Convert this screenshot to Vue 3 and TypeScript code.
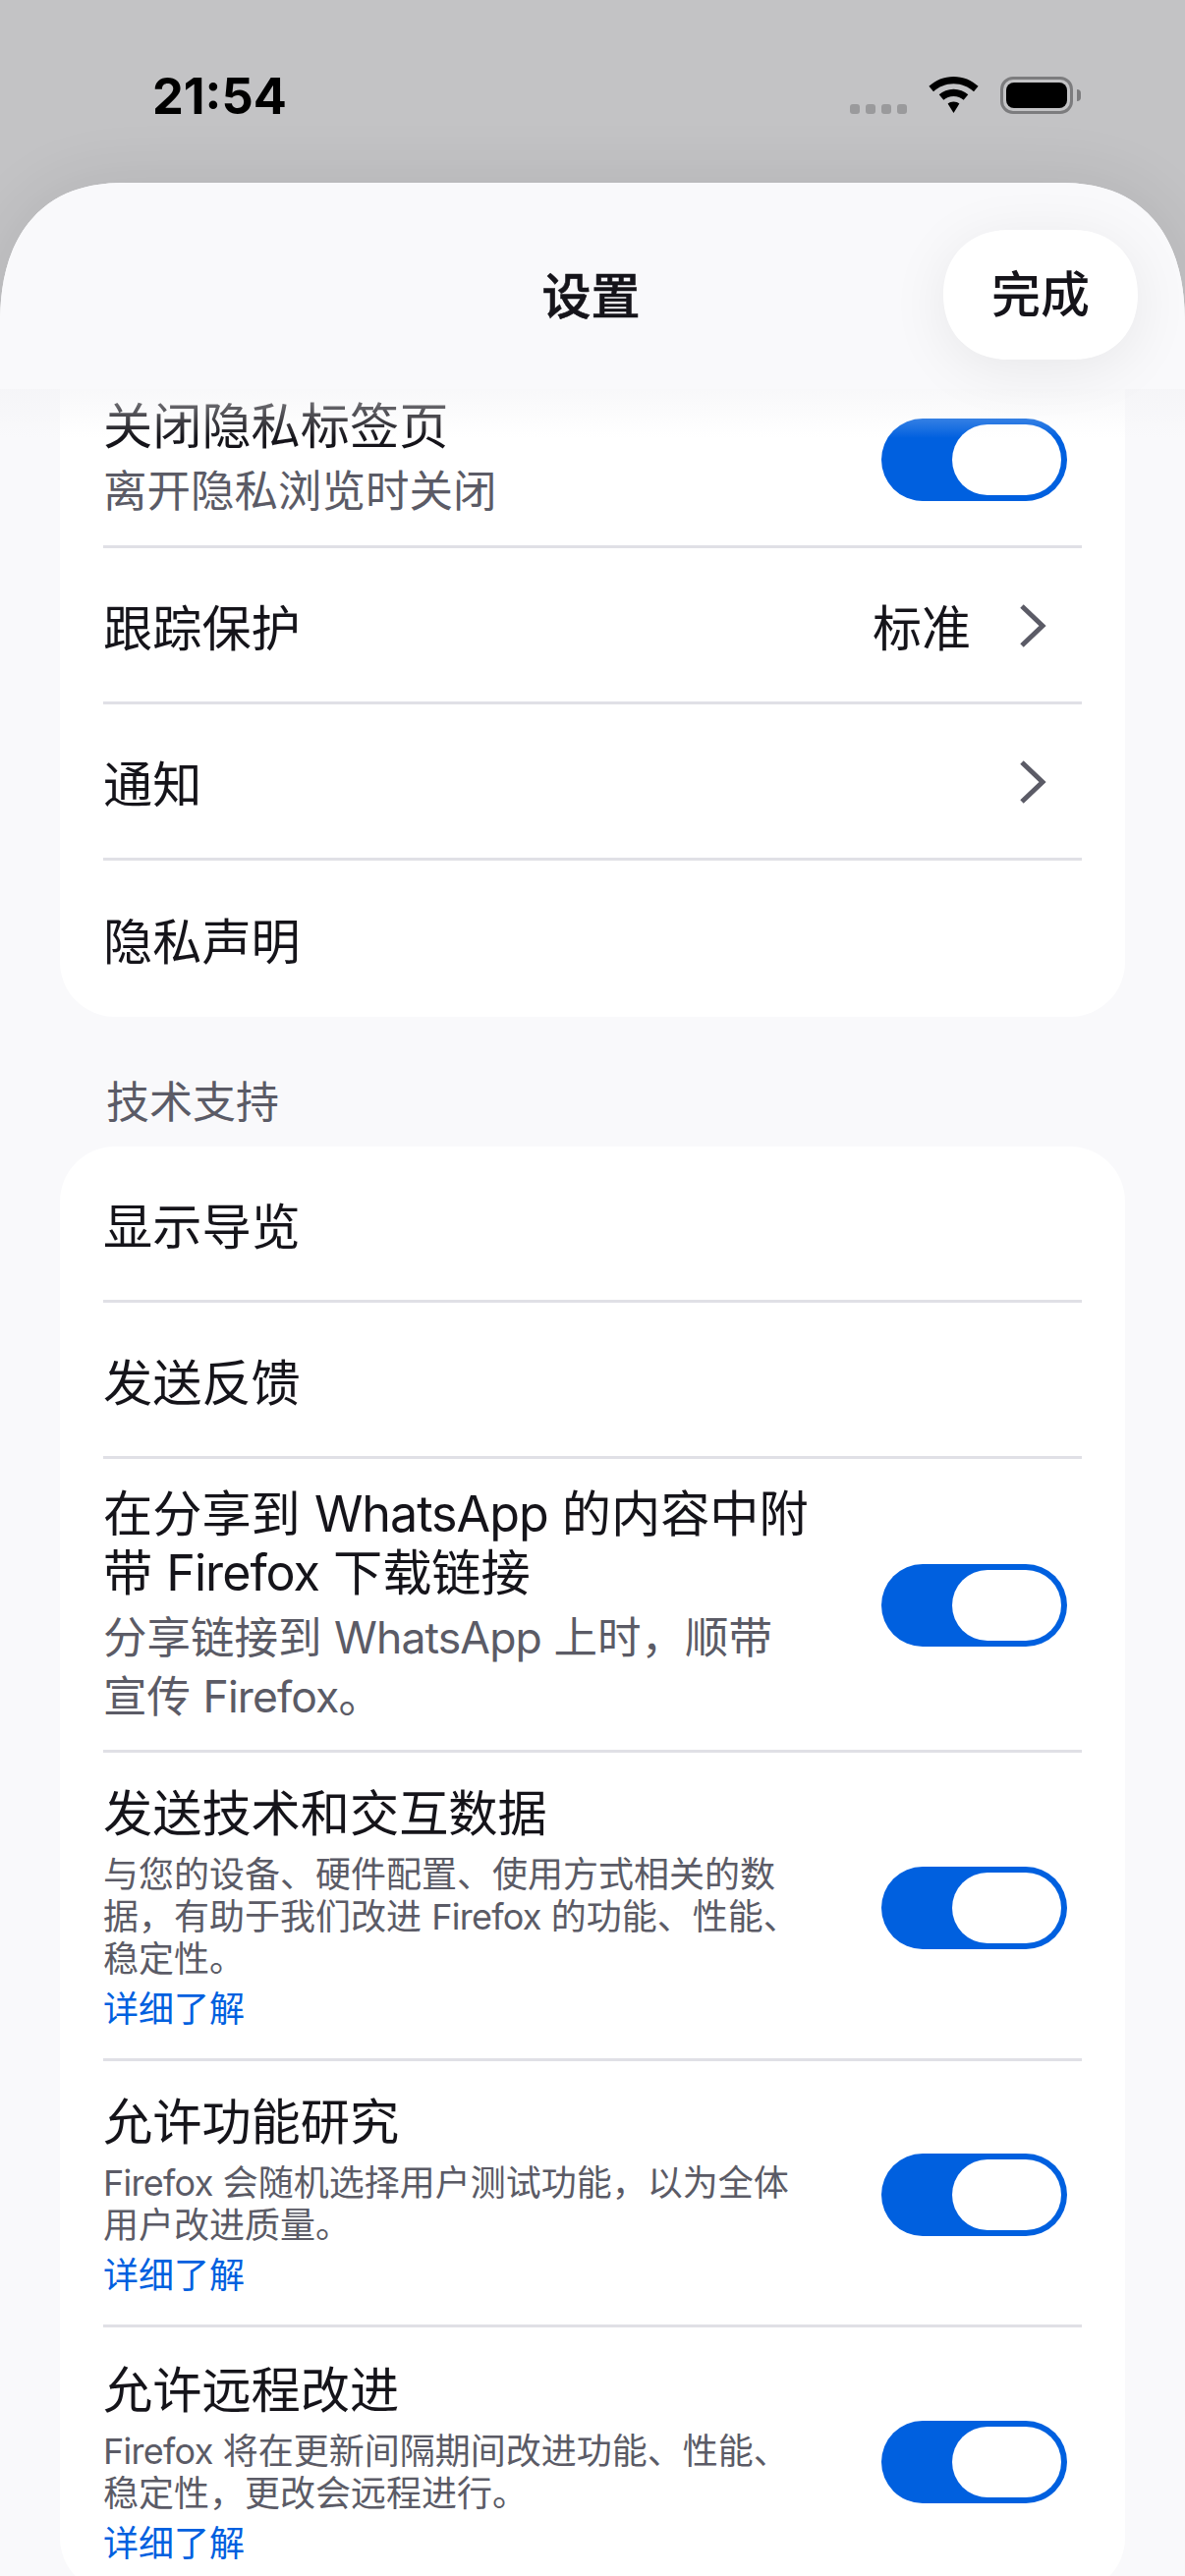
<script setup lang="ts">
interface Row {
  title: string[]
  sub?: string[]
  small?: string[]
  link?: boolean
  toggle?: boolean
  value?: string
  chevron?: boolean
  variant?: string
}

const privacy: Row[] = [
  { title: ['关闭隐私标签页'], sub: ['离开隐私浏览时关闭'], toggle: true, variant: 'first' },
  { title: ['跟踪保护'], value: '标准', chevron: true },
  { title: ['通知'], chevron: true },
  { title: ['隐私声明'] },
]

const support: Row[] = [
  { title: ['显示导览'] },
  { title: ['发送反馈'] },
  {
    title: ['在分享到 WhatsApp 的内容中附', '带 Firefox 下载链接'],
    sub: ['分享链接到 WhatsApp 上时，顺带', '宣传 Firefox。'],
    toggle: true,
  },
  {
    title: ['发送技术和交互数据'],
    small: ['与您的设备、硬件配置、使用方式相关的数', '据，有助于我们改进 Firefox 的功能、性能、', '稳定性。'],
    link: true,
    toggle: true,
    variant: 'tall',
  },
  {
    title: ['允许功能研究'],
    small: ['Firefox 会随机选择用户测试功能，以为全体', '用户改进质量。'],
    link: true,
    toggle: true,
    variant: 'tall',
  },
  {
    title: ['允许远程改进'],
    small: ['Firefox 将在更新间隔期间改进功能、性能、', '稳定性，更改会远程进行。'],
    link: true,
    toggle: true,
    variant: 'tall',
  },
]

const groups = [
  { label: '', rows: privacy },
  { label: '技术支持', rows: support },
]

// Latin words are tracked tighter than the CJK text around them.
function segments(text: string): { text: string; latin: boolean }[] {
  return text
    .split(/([A-Za-z]+)/)
    .filter((s) => s.length > 0)
    .map((s) => ({ text: s, latin: /^[A-Za-z]+$/.test(s) }))
}
</script>

<template>
  <div class="screen">
    <div class="status">
      <span class="time">21:54</span>
      <div class="status-icons">
        <div class="dots"><i></i><i></i><i></i><i></i></div>
        <svg class="wifi" width="51" height="38" viewBox="0 0 51 38">
          <path d="M25.500 0C15.800 0 7 3.700 .4 9.800L5 15.300C10.300 10.300 17.500 7.300 25.500 7.300S40.700 10.300 46 15.300L50.600 9.800C44 3.700 35.200 0 25.500 0Z" fill="#000" />
          <path d="M25.500 12.800C19.800 12.800 14.700 14.900 10.700 18.300L15.300 23.800C18 21.500 21.600 20.100 25.500 20.100S33 21.500 35.700 23.800L40.300 18.300C36.300 14.900 31.200 12.800 25.500 12.800Z" fill="#000" />
          <path d="M25.500 25.500C23.200 25.500 21 26.200 19.600 27.500L25.500 37L31.400 27.500C30 26.200 27.800 25.500 25.500 25.500Z" fill="#000" />
        </svg>
        <div class="battery"><div class="battery-fill"></div></div>
      </div>
    </div>

    <div class="sheet">
      <header class="nav">
        <h1 class="nav-title">设置</h1>
        <button class="done">完成</button>
      </header>

      <div class="content">
        <section v-for="g in groups" :key="g.label" class="group">
          <h2 v-if="g.label" class="group-label">{{ g.label }}</h2>
          <div class="card" :class="{ 'card-cut': !g.label }">
            <div v-for="r in g.rows" :key="r.title[0]" class="row" :class="r.variant">
              <div class="row-inner" :class="{ simple: !r.sub && !r.small }">
                <div class="text">
                  <div class="title">
                    <div v-for="l in r.title" :key="l" class="line">
                      <span v-for="(s, i) in segments(l)" :key="i" :class="{ latin: s.latin }">{{ s.text }}</span>
                    </div>
                  </div>
                  <div v-if="r.sub" class="sub">
                    <div v-for="l in r.sub" :key="l" class="line">
                      <span v-for="(s, i) in segments(l)" :key="i" :class="{ latin: s.latin }">{{ s.text }}</span>
                    </div>
                  </div>
                  <div v-if="r.small" class="small">
                    <div v-for="l in r.small" :key="l" class="line">
                      <span v-for="(s, i) in segments(l)" :key="i" :class="{ latin: s.latin }">{{ s.text }}</span>
                    </div>
                  </div>
                  <div v-if="r.link" class="link">详细了解</div>
                </div>
                <span v-if="r.value" class="value">{{ r.value }}</span>
                <svg v-if="r.chevron" class="chevron" width="30" height="48" viewBox="0 0 30 48">
                  <path d="M5 4L26 24L5 44" fill="none" stroke="#5b5b66" stroke-width="5" />
                </svg>
                <div v-if="r.toggle" class="toggle"><div class="knob"></div></div>
              </div>
            </div>
          </div>
        </section>
      </div>
    </div>
  </div>
</template>

<style>
html, body { margin: 0; padding: 0; }
</style>

<style scoped>
.screen {
  width: 1206px;
  height: 2622px;
  overflow: hidden;
  background: #c3c3c5;
  font-family: Inter, "Noto Sans CJK SC", sans-serif;
  display: flex;
  flex-direction: column;
  color: #15141a;
}
.status {
  height: 186px;
  flex: none;
  display: flex;
  justify-content: space-between;
  align-items: flex-start;
  padding: 0 114px 0 155px;
  box-sizing: border-box;
}
.time {
  font-size: 50.5px;
  font-weight: 650;
  line-height: 60px;
  margin-top: 68px;
  color: #000;
}
.status-icons { display: flex; align-items: flex-start; margin-top: 78px; }
.dots { display: flex; gap: 6px; margin-top: 28px; margin-right: 22px; }
.dots i { width: 10px; height: 10px; border-radius: 3px; background: #9a9a9c; display: block; }
.wifi { margin-right: 22px; }
.battery {
  position: relative;
  width: 74px;
  height: 38px;
  border: 3px solid #7c7c7e;
  border-radius: 13px;
  box-sizing: border-box;
  padding: 3px;
}
.battery::after {
  content: "";
  position: absolute;
  right: -11px;
  top: 10px;
  width: 4px;
  height: 12px;
  background: #7c7c7e;
  border-radius: 0 4px 4px 0;
}
.battery-fill { width: 100%; height: 100%; background: #000; border-radius: 8px; }

.sheet {
  position: relative;
  flex: 1;
  background: #f9f9fb;
  border-radius: 128px 128px 0 0 / 146px 146px 0 0;
  corner-shape: superellipse(1.25);
  box-shadow: 0 0 70px rgba(0, 0, 0, .09);
  overflow: hidden;
}
.nav {
  position: absolute;
  inset: 0 0 auto 0;
  height: 210px;
  z-index: 2;
  display: flex;
  align-items: center;
  justify-content: center;
  background: #f9f9fb;
}
.nav::after {
  content: "";
  position: absolute;
  left: 0;
  right: 0;
  top: 100%;
  height: 50px;
  background: linear-gradient(rgba(242, 242, 245, .55), rgba(249, 249, 251, 0));
  pointer-events: none;
}
.nav-title {
  margin: 0 3px 0 0;
  font-size: 50px;
  font-weight: 500;
  line-height: 60px;
  position: relative;
  top: 11px;
  -webkit-text-stroke: .6px #15141a;
}
.done {
  position: absolute;
  left: 960px;
  top: 48px;
  width: 198px;
  height: 132px;
  border: 0;
  padding: 0;
  border-radius: 66px;
  corner-shape: superellipse(1.1);
  background: #fff;
  color: #15141a;
  font: inherit;
  font-size: 50px;
  font-weight: 500;
  line-height: 128px;
  z-index: 1;
  box-shadow: 0 10px 60px rgba(0, 0, 0, .075);
}
.content { padding: 198px 61px 0 61px; }
.group-label {
  margin: 57px 0 0 47px;
  height: 75px;
  font-size: 44px;
  font-weight: 400;
  line-height: 60px;
  color: #5b5b66;
}
.card { background: #fff; border-radius: 56px; }
.card-cut { border-radius: 0 0 56px 56px; }
.row { padding-left: 44px; }
.row-inner {
  display: flex;
  align-items: center;
  border-bottom: 3px solid #e0e0e6;
  padding: 26px 0 24px;
  min-height: 159px;
  box-sizing: border-box;
  margin-right: 44px;
}
.row:last-child .row-inner { border-bottom: 0; }
.row-inner.simple { height: 159px; padding: 7px 0 0; }
.first .row-inner { height: 174px; padding: 0 0 5px; }
.first .toggle { margin-top: 2px; }
.tall .row-inner { padding: 32px 0 25px; }
.tall:last-child .row-inner { padding-top: 34px; }
.tall .toggle { margin-bottom: 3px; }
.tall:last-child .toggle { margin-bottom: 5px; }
.text { flex: 1; min-width: 0; }
.line { white-space: nowrap; }
.title { font-size: 50.2px; line-height: 60px; }
.sub { font-size: 44.5px; line-height: 60px; color: #5b5b66; margin-top: 6px; }
.small { font-size: 36px; line-height: 43px; color: #5b5b66; margin-top: 11px; }
.link { font-size: 36px; line-height: 50px; color: #0060df; margin-top: 4px; }
.latin { letter-spacing: -.02em; }
.value { font-size: 50px; line-height: 60px; margin-right: 47px; }
.chevron { margin-right: 36px; margin-bottom: 6px; flex: none; }
.toggle {
  margin-left: auto;
  width: 189px;
  height: 84px;
  border-radius: 42px;
  background: #0060df;
  flex: none;
  margin-right: 15px;
  padding: 6px;
  box-sizing: border-box;
  display: flex;
  justify-content: flex-end;
}
.knob { width: 111px; height: 72px; border-radius: 36px; background: #fff; }
</style>
